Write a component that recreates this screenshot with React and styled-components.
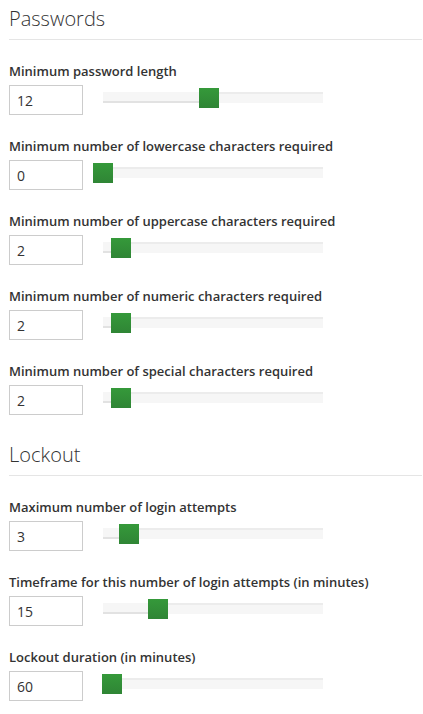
import React from "react";
import styled, { createGlobalStyle } from "styled-components";

const Global = createGlobalStyle`
  html, body { margin: 0; padding: 0; background: #fff; }
  body { font-family: "Open Sans", "Noto Sans", sans-serif; color: #333; }
`;

const Page = styled.div`
  padding: 0 1px 0 9px;
  width: 423px;
  box-sizing: border-box;
`;

const Section = styled.section`
  & + & { margin-top: 21px; }
`;

const Heading = styled.h2`
  margin: 0;
  padding: 4px 0 5px;
  font-size: 20px;
  line-height: 30px;
  font-weight: 300;
  color: #333;
  border-bottom: 1px solid #e5e5e5;
`;

const Row = styled.div`
  margin-top: 21px;
  display: flex;
  flex-direction: column;
  gap: 4px;
`;

const Label = styled.label`
  font-size: 13px;
  line-height: 20px;
  font-weight: 600;
  color: #333;
  white-space: nowrap;
`;

const Controls = styled.div`
  display: flex;
  align-items: flex-start;
  height: 30px;
`;

const Input = styled.input`
  box-sizing: border-box;
  width: 74px;
  height: 30px;
  border: 1px solid #ccc;
  padding: 0 7px;
  font-family: inherit;
  font-size: 14px;
  color: #333;
  background: #fff;
  outline: none;
  margin: 0;
`;

const Slider = styled.div`
  position: relative;
  margin: 3px 0 0 20px;
  width: 220px;
  height: 20px;
`;

const Track = styled.div`
  position: absolute;
  left: 0;
  right: 0;
  top: 4px;
  height: 11px;
  box-sizing: border-box;
  background: #f6f6f6;
  border-top: 2px solid #ececec;
`;

const Fill = styled.div`
  position: absolute;
  left: 0;
  top: 4px;
  height: 11px;
  box-sizing: border-box;
  background: #f6f6f6;
  border-bottom: 2px solid #e2e2e2;
`;

const Handle = styled.div`
  position: absolute;
  top: 0;
  width: 20px;
  height: 20px;
  margin-left: -10px;
  background: linear-gradient(#35993a, #2f8535);
`;

const sections = [
  {
    title: "Passwords",
    rows: [
      { label: "Minimum password length", value: 12, max: 25 },
      { label: "Minimum number of lowercase characters required", value: 0, max: 25 },
      { label: "Minimum number of uppercase characters required", value: 2, max: 25 },
      { label: "Minimum number of numeric characters required", value: 2, max: 25 },
      { label: "Minimum number of special characters required", value: 2, max: 25 },
    ],
  },
  {
    title: "Lockout",
    rows: [
      { label: "Maximum number of login attempts", value: 3, max: 25 },
      { label: "Timeframe for this number of login attempts (in minutes)", value: 15, max: 60 },
      { label: "Lockout duration (in minutes)", value: 60, max: 1440 },
    ],
  },
];

function SettingRow({ label, value, max }) {
  const pos = (value / max) * 220;
  return (
    <Row>
      <Label>{label}</Label>
      <Controls>
        <Input defaultValue={value} />
        <Slider>
          <Track />
          <Fill style={{ width: pos }} />
          <Handle style={{ left: pos }} />
        </Slider>
      </Controls>
    </Row>
  );
}

export default function App() {
  return (
    <Page>
      <Global />
      {sections.map((s) => (
        <Section key={s.title}>
          <Heading>{s.title}</Heading>
          {s.rows.map((r) => (
            <SettingRow key={r.label} {...r} />
          ))}
        </Section>
      ))}
    </Page>
  );
}
